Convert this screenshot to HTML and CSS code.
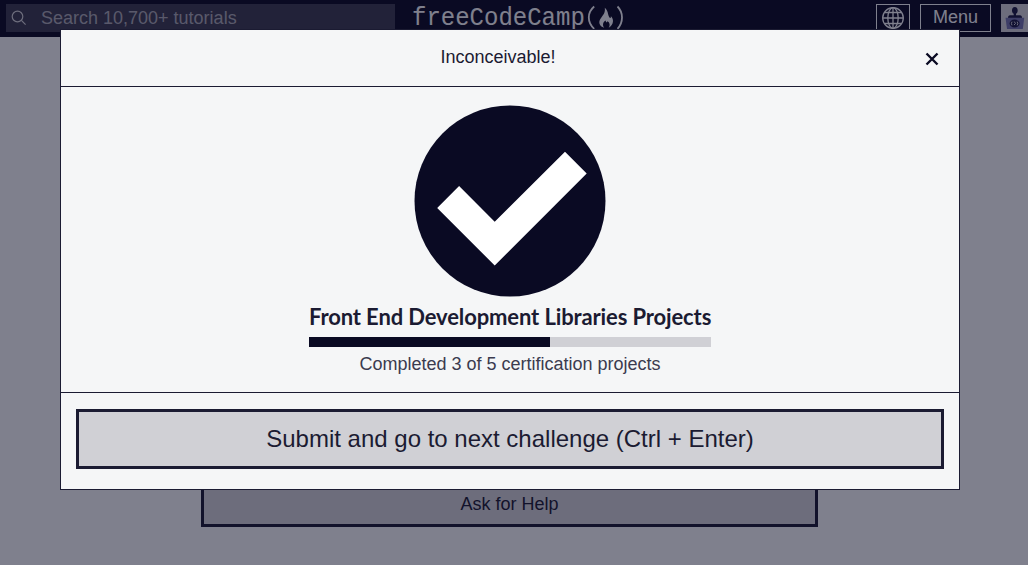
FILE: index.html
```html
<!DOCTYPE html>
<html lang="en">
<head>
<meta charset="utf-8">
<title>Front End Development Libraries Projects</title>
<link rel="stylesheet" href="styles.css">
</head>
<body>
<header class="site-header">
  <div class="search">
    <svg class="search-icon" viewBox="0 0 16 16"><circle cx="6.5" cy="6.5" r="5.3"/><path d="M10.4 10.4L14.6 14.6"/></svg>
    <span>Search 10,700+ tutorials</span>
  </div>
  <div class="logo">
    <span class="logo-text">freeCodeCamp</span>
    <svg class="logo-flame" viewBox="0 0 38 26"><path class="paren" d="M9.200 2.500Q3.800 7 3.800 13.500T9.200 24.800M32.500 2.500Q37 7 37 13.500T32.500 24.800"/><path class="flame" d="M19.800 3.800C23.600 7.200 22.400 10 24.300 13.300C25.300 14.900 26.500 13.600 25.700 12C29.200 15.200 28.900 20.500 23.700 23.800C25.500 20.800 24.500 18.500 22.500 16.900C22.300 18.800 20.700 18.600 20.700 16.400C18.200 17.700 17 20.800 19.200 23.800C14.200 22 12.900 17.700 16 13.900C18.500 10.700 20.400 8.600 19.800 3.800Z"/></svg>
  </div>
  <nav class="actions">
    <div class="nav-button language"><svg viewBox="0 0 24 24"><circle cx="12" cy="12" r="10.300"/><ellipse cx="12" cy="12" rx="5.200" ry="10.300"/><path d="M12 1.700V22.300M1.700 12H22.300M3.500 6.500H20.500M3.500 17.500H20.500"/></svg></div>
    <div class="nav-button menu"><span>Menu</span></div>
    <div class="avatar"><svg viewBox="0 0 27 28"><path class="ink" d="M13.800 3C17.300 3 17.500 8.800 15 9.700V11.200H19Q21 11.200 21 14H7Q7 11.200 9 11.200H12.700V9.700C10.200 8.800 10.300 3 13.800 3Z"/><path class="laptop" d="M4.500 13.800H23.200L21.800 25H6Z"/><ellipse class="ink" cx="13.600" cy="19.500" rx="5" ry="4"/><path class="mark" d="M11 17.700Q9.800 19.500 11 21.300M16.200 17.700Q17.400 19.500 16.200 21.300M13.300 17.600L14.500 19.500L13 21"/></svg></div>
  </nav>
</header>
<main class="page"><div class="help-button">Ask for Help</div></main>
<div class="backdrop">
  <section class="dialog">
    <div class="dialog-header">
      <span>Inconceivable!</span>
      <svg class="close" viewBox="0 0 14 14"><path d="M1.500 1.500L12.500 12.500M12.500 1.500L1.500 12.500"/></svg>
    </div>
    <div class="dialog-body">
      <svg class="check" viewBox="0 0 192 192"><circle cx="96" cy="96" r="95.500"/><path d="M23.200 103L45.100 81L80.700 116.700L151 46.700L172.700 68.500L80.700 160.500Z"/></svg>
      <div class="progress">
        <h2>Front End Development Libraries Projects</h2>
        <div class="track"><div class="fill"></div></div>
        <p>Completed 3 of 5 certification projects</p>
      </div>
    </div>
    <div class="dialog-footer"><div class="submit">Submit and go to next challenge (Ctrl + Enter)</div></div>
  </section>
</div>
</body>
</html>
```
FILE: styles.css
```css
* { box-sizing: border-box; }
body {
  margin: 0;
  height: 565px;
  overflow: hidden;
  background: #f5f6f7;
  color: #1b1b32;
  font: 18px/27px "Liberation Sans", Arial, sans-serif;
}
.site-header {
  display: grid;
  grid-template-columns: 389px 1fr auto;
  height: 37px;
  padding: 4px 0 0 6px;
  background: #0a0a23;
  color: #f5f6f7;
}
.search {
  display: flex;
  align-items: center;
  gap: 14px;
  height: 28px;
  padding-left: 5px;
  background: #3b3b4f;
  color: #a9a9b2;
}
.search-icon { width: 16px; height: 16px; fill: none; stroke: #d0d0d5; stroke-width: 1.2; }
.logo { display: flex; height: 28px; padding-left: 17px; }
.logo-text {
  width: 173px;
  font: 24px/28px "Liberation Mono", monospace;
  transform: scaleY(1.1);
}
.logo-flame { width: 38px; height: 26px; }
.paren { fill: none; stroke: #f5f6f7; stroke-width: 1.8; }
.flame { fill: #f5f6f7; }
.actions { display: flex; gap: 10px; }
.nav-button {
  display: flex;
  align-items: center;
  justify-content: center;
  height: 28px;
  border: 1px solid #f5f6f7;
}
.language { width: 34px; }
.language svg { width: 24px; height: 24px; fill: none; stroke: #f5f6f7; stroke-width: 1.3; }
.menu { width: 71px; padding-bottom: 2px; }
.avatar { width: 27px; height: 28px; background: #d0d0d5; }
.avatar svg { display: block; width: 27px; height: 28px; }
.ink { fill: #1b1b42; }
.laptop { fill: #7272ab; }
.mark { fill: none; stroke: #d0d0d5; stroke-width: 1; }
.page { padding: 444px 210px 0 201px; }
.help-button {
  height: 46px;
  padding-top: 7px;
  border: 3px solid #1b1b32;
  background: #d0d0d5;
  text-align: center;
}
.backdrop {
  position: absolute;
  inset: 0;
  padding: 29px 68px 0 60px;
  background: rgba(10, 10, 35, .5);
}
.dialog {
  width: 900px;
  height: 461px;
  border: 1px solid #1b1b32;
  background: #f5f6f7;
}
.dialog-header {
  display: grid;
  grid-template-columns: 1fr auto 1fr;
  align-items: center;
  height: 57px;
  padding: 0 20px 2px 0;
  border-bottom: 1px solid #1b1b32;
}
.dialog-header span { grid-column: 2; margin-right: 4px; }
.close { justify-self: end; width: 14px; height: 14px; margin-top: 3px; fill: none; stroke: #0a0a23; stroke-width: 2.4; }
.dialog-body {
  display: flex;
  flex-direction: column;
  align-items: center;
  height: 305px;
  padding-top: 18px;
}
.check { width: 192px; height: 192px; fill: #0a0a23; }
.check path { fill: #fff; }
.progress { width: 402px; }
h2 {
  margin: 5px 0 0;
  font: bold 22px/30px Lato, sans-serif;
  letter-spacing: -.125px;
  text-align: center;
  white-space: nowrap;
}
.track { height: 10px; margin-top: 5px; background: #d0d0d5; }
.fill { width: 60%; height: 100%; background: #0a0a23; }
p { margin: 4px 0 0; color: #3b3b4f; text-align: center; }
.dialog-footer { height: 97px; padding: 16px 15px 0; border-top: 1px solid #1b1b32; }
.submit {
  height: 60px;
  border: 3px solid #1b1b32;
  background: #d0d0d5;
  font-size: 24px;
  line-height: 54px;
  text-align: center;
}
```
